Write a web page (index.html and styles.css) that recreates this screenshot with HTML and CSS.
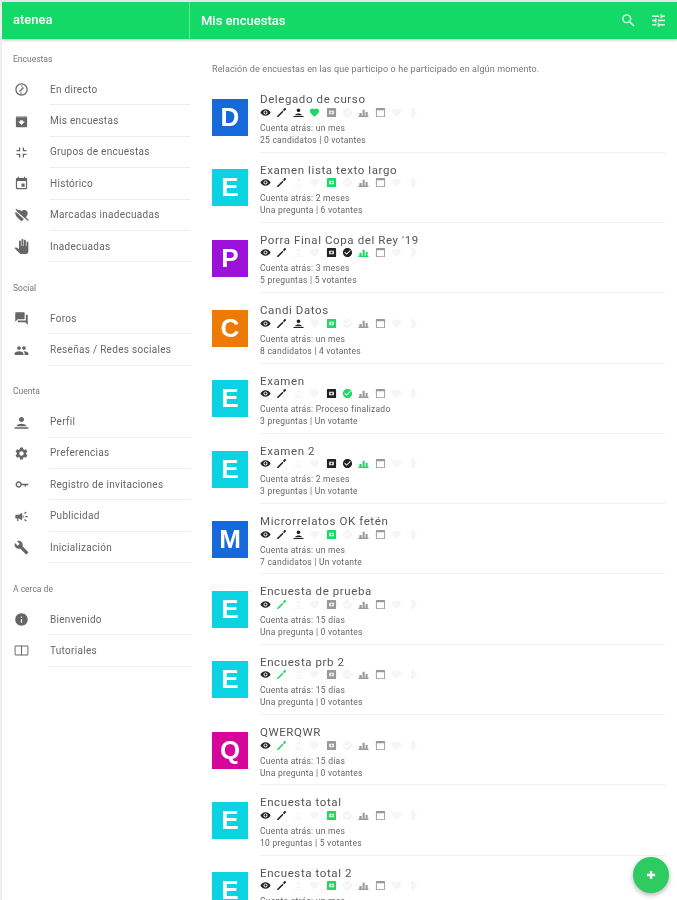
FILE: index.html
```html
<!DOCTYPE html>
<html lang="en">
<head>
    <meta charset="UTF-8">
    <meta name="viewport" content="width=device-width, initial-scale=1.0">
    <title>atenea</title>
    <link rel="stylesheet" href="styles.css">
</head>
<body>
    <svg class="sprite" xmlns="http://www.w3.org/2000/svg">
        <symbol id="i-search" viewBox="0 0 24 24"><path d="M15.5 14h-.79l-.28-.27A6.471 6.471 0 0 0 16 9.5 6.5 6.5 0 1 0 9.5 16c1.61 0 3.09-.59 4.23-1.57l.27.28v.79l5 4.99L20.49 19l-4.99-5zm-6 0C7.01 14 5 11.99 5 9.5S7.01 5 9.5 5 14 7.01 14 9.5 11.99 14 9.5 14z"/></symbol>
        <symbol id="i-tune" viewBox="0 0 24 24"><path d="M3 17v2h6v-2H3zM3 5v2h10V5H3zm10 16v-2h8v-2h-8v-2h-2v6h2zM7 9v2H3v2h4v2h2V9H7zm14 4v-2H11v2h10zm-6-4h2V7h4V5h-4V3h-2v6z"/></symbol>
        <symbol id="i-live" viewBox="0 0 24 24"><path fill-rule="evenodd" d="M12 2a10 10 0 1 1 0 20 10 10 0 0 1 0-20zm0 2a8 8 0 1 0 0 16 8 8 0 0 0 0-16z"/><path d="M12 5v3.5L14.5 6zM12 19v-3.5L9.500 18zM8 14.500L14.500 8l1.500 1.500L9.500 16z"/></symbol>
        <symbol id="i-archive" viewBox="0 0 24 24"><path d="M20.54 5.23l-1.39-1.68C18.88 3.21 18.47 3 18 3H6c-.47 0-.88.21-1.16.55L3.46 5.23C3.17 5.57 3 6.02 3 6.5V19c0 1.1.9 2 2 2h14c1.1 0 2-.9 2-2V6.5c0-.48-.17-.93-.46-1.27zM12 17.5L6.5 12H10v-2h4v2h3.5L12 17.5zM5.12 5l.81-1h12l.94 1H5.12z"/></symbol>
        <symbol id="i-groups" viewBox="0 0 24 24"><path d="M4 16h4v4h2v-6H4v2zm4-8H4v2h6V4H8v4zm6 12h2v-4h4v-2h-6v6zm2-12V4h-2v6h6V8h-4z"/></symbol>
        <symbol id="i-event" viewBox="0 0 24 24"><path d="M17 12h-5v5h5v-5zM16 1v2H8V1H6v2H5c-1.11 0-1.99.9-1.99 2L3 19c0 1.1.89 2 2 2h14c1.1 0 2-.9 2-2V5c0-1.1-.9-2-2-2h-1V1h-2zm3 18H5V8h14v11z"/></symbol>
        <symbol id="i-heart" viewBox="0 0 24 24"><path d="M12 21.35l-1.45-1.32C5.4 15.36 2 12.28 2 8.5 2 5.42 4.42 3 7.5 3c1.74 0 3.41.81 4.5 2.09C13.09 3.81 14.76 3 16.5 3 19.58 3 22 5.42 22 8.5c0 3.78-3.4 6.86-8.55 11.54L12 21.35z"/></symbol>
        <symbol id="i-flagged" viewBox="0 0 24 24"><path d="M12 21.35l-1.45-1.32C5.4 15.36 2 12.28 2 8.5 2 5.42 4.42 3 7.5 3c1.74 0 3.41.81 4.5 2.09C13.09 3.81 14.76 3 16.5 3 19.58 3 22 5.42 22 8.5c0 3.78-3.4 6.86-8.55 11.54L12 21.35z"/><path d="M2 4l20 18" stroke="#fff" stroke-width="2"/><path d="M3 2l20 18" stroke="currentColor" stroke-width="2"/></symbol>
        <symbol id="i-hand" viewBox="0 0 24 24"><path d="M23 5.5V20c0 2.2-1.8 4-4 4h-7.3c-1.08 0-2.1-.43-2.85-1.19L1 14.83s1.26-1.23 1.3-1.25c.22-.19.49-.29.79-.29.22 0 .42.06.6.16.04.01 4.31 2.46 4.31 2.46V4c0-.83.67-1.5 1.5-1.5S11 3.17 11 4v7h1V1.5c0-.83.67-1.5 1.5-1.5S15 .67 15 1.5V11h1V2.5c0-.83.67-1.5 1.5-1.5s1.5.67 1.5 1.5V11h1V5.5c0-.83.67-1.5 1.5-1.5s1.5.67 1.5 1.5z"/></symbol>
        <symbol id="i-forum" viewBox="0 0 24 24"><path d="M21 6h-2v9H6v2c0 .55.45 1 1 1h11l4 4V7c0-.55-.45-1-1-1zm-4 6V3c0-.55-.45-1-1-1H3c-.55 0-1 .45-1 1v14l4-4h10c.55 0 1-.45 1-1z"/></symbol>
        <symbol id="i-people" viewBox="0 0 24 24"><path d="M16 11c1.66 0 2.99-1.34 2.99-3S17.66 5 16 5c-1.66 0-3 1.34-3 3s1.34 3 3 3zm-8 0c1.66 0 2.99-1.34 2.99-3S9.66 5 8 5C6.34 5 5 6.34 5 8s1.34 3 3 3zm0 2c-2.33 0-7 1.17-7 3.5V19h14v-2.5c0-2.33-4.67-3.5-7-3.5zm8 0c-.29 0-.62.02-.97.05 1.16.84 1.97 1.97 1.97 3.45V19h6v-2.5c0-2.33-4.67-3.5-7-3.5z"/></symbol>
        <symbol id="i-person" viewBox="0 0 24 24"><path d="M12 12c2.21 0 4-1.79 4-4s-1.790-4-4-4-4 1.79-4 4 1.79 4 4 4zm0 2c-2.67 0-8 1.34-8 4v2h16v-2c0-2.66-5.33-4-8-4z"/></symbol>
        <symbol id="i-person-wide" viewBox="0 0 24 24"><path d="M12 11c2.21 0 4-1.79 4-4s-1.790-4-4-4-4 1.79-4 4 1.79 4 4 4zm0 3c-2.67 0-7 1-8 4h16c-1-3-5.33-4-8-4zM1 19.500h22V22H1z"/></symbol>
        <symbol id="i-settings" viewBox="0 0 24 24"><path d="M19.14 12.94c.04-.3.06-.61.06-.94 0-.32-.02-.64-.07-.94l2.03-1.58c.18-.14.23-.41.12-.61l-1.92-3.32c-.12-.22-.37-.29-.59-.22l-2.39.96c-.5-.38-1.03-.7-1.62-.94l-.36-2.54c-.04-.24-.24-.41-.48-.41h-3.84c-.24 0-.43.17-.47.41l-.36 2.54c-.59.24-1.13.57-1.62.94l-2.39-.96c-.22-.08-.47 0-.59.22L2.74 8.87c-.12.21-.08.47.12.61l2.03 1.58c-.05.3-.09.63-.09.94s.02.64.07.94l-2.03 1.58c-.18.14-.23.41-.12.61l1.92 3.32c.12.22.37.29.59.22l2.39-.96c.5.38 1.03.7 1.62.94l.36 2.54c.05.24.24.41.48.41h3.84c.24 0 .44-.17.47-.41l.36-2.54c.59-.24 1.13-.56 1.62-.94l2.39.96c.22.08.47 0 .59-.22l1.92-3.32c.12-.22.07-.47-.12-.61l-2.01-1.58zM12 15.6c-1.98 0-3.6-1.62-3.6-3.6s1.62-3.6 3.6-3.6 3.6 1.62 3.6 3.6-1.62 3.6-3.6 3.6z"/></symbol>
        <symbol id="i-key" viewBox="0 0 24 24"><path fill-rule="evenodd" d="M12.300 10.800A5 5 0 1 0 12.300 13.200H17v1.800h2.500v-1.800H23v-2.400H12.300zM7.500 14.800a2.800 2.800 0 1 1 0-5.600 2.800 2.800 0 0 1 0 5.600z"/></symbol>
        <symbol id="i-campaign" viewBox="0 0 24 24"><path d="M18 11v2h4v-2h-4zm-2 6.61c.96.71 2.21 1.65 3.2 2.39.4-.53.8-1.07 1.2-1.6-.99-.74-2.24-1.68-3.2-2.4-.4.54-.8 1.08-1.2 1.61zM20.4 5.6c-.4-.53-.8-1.07-1.2-1.6-.99.74-2.24 1.68-3.2 2.4.4.53.8 1.07 1.2 1.6.96-.72 2.21-1.65 3.2-2.4zM4 9c-1.1 0-2 .9-2 2v2c0 1.1.9 2 2 2h1v4h2v-4h1l5 3V6L8 9H4zm11.5 3c0-1.33-.58-2.53-1.5-3.35v6.69c.92-.81 1.5-2.01 1.5-3.34z"/></symbol>
        <symbol id="i-build" viewBox="0 0 24 24"><path d="M22.7 19l-9.1-9.1c.9-2.3.4-5-1.5-6.9-2-2-5-2.4-7.4-1.3L9 6 6 9 1.6 4.7C.4 7.1.9 10.1 2.9 12.1c1.9 1.9 4.6 2.4 6.9 1.5l9.1 9.1c.4.4 1 .4 1.4 0l2.3-2.3c.5-.4.5-1.1.1-1.4z"/></symbol>
        <symbol id="i-info" viewBox="0 0 24 24"><path d="M12 2C6.48 2 2 6.48 2 12s4.48 10 10 10 10-4.48 10-10S17.52 2 12 2zm1 15h-2v-6h2v6zm0-8h-2V7h2v2z"/></symbol>
        <symbol id="i-book" viewBox="0 0 24 24"><path d="M3 4h18a2 2 0 0 1 2 2v12a2 2 0 0 1-2 2H3a2 2 0 0 1-2-2V6a2 2 0 0 1 2-2zm-.500 1.500v13h8.700v-13H2.500zm10.300 0v13h8.700v-13h-8.700z"/></symbol>
        <symbol id="i-eye" viewBox="0 0 24 24"><path d="M12 5C7 5 2.730 7.900 1 12c1.730 4.100 6 7 11 7s9.270-2.900 11-7c-1.730-4.100-6-7-11-7zm0 11.500a4.500 4.500 0 1 1 0-9 4.500 4.500 0 0 1 0 9zm0-7a2.500 2.500 0 1 0 0 5 2.500 2.500 0 0 0 0-5z"/></symbol>
        <symbol id="i-edit" viewBox="0 0 24 24"><path d="M2.500 19.500V22h2.500L16.500 10.500 14 8 2.500 19.500zM21.700 5.400c.4-.4.4-1 0-1.400l-1.700-1.700c-.4-.4-1-.4-1.400 0L15.200 6.800l2.500 2.500 4-3.900z"/></symbol>
        <symbol id="i-box" viewBox="0 0 24 24"><path fill-rule="evenodd" d="M20 2H4a2 2 0 0 0-2 2v16a2 2 0 0 0 2 2h16a2 2 0 0 0 2-2V4a2 2 0 0 0-2-2zm-3 14H7V8h10v8z"/><path d="M10 10h4v4h-4z"/></symbol>
        <symbol id="i-check" viewBox="0 0 24 24"><path d="M12 2C6.48 2 2 6.48 2 12s4.48 10 10 10 10-4.48 10-10S17.52 2 12 2zm-2 15l-5-5 1.41-1.41L10 14.17l7.59-7.59L19 8l-9 9z"/></symbol>
        <symbol id="i-bars" viewBox="0 0 24 24"><path d="M1 19h22v3H1zM3 13h5v6H3zM10 6h4.500v13H10zM16.500 11H21v8h-4.500z"/></symbol>
        <symbol id="i-cal" viewBox="0 0 24 24"><path d="M20 2H4a2 2 0 0 0-2 2v16c0 1.100.9 2 2 2h16c1.100 0 2-.9 2-2V4a2 2 0 0 0-2-2zm0 18H4V7h16v13z"/></symbol>
        <symbol id="i-tag" viewBox="0 0 24 24"><path d="M7 2h6l7 10-7 10H7z"/></symbol>
        <symbol id="i-plus" viewBox="0 0 24 24"><path d="M19 14h-5v5h-4v-5H5v-4h5V5h4v5h5v4z"/></symbol>
    </svg>

    <div class="app">
        <header class="topbar">
            <div class="brand">atenea</div>
            <div class="page-bar">
                <h1>Mis encuestas</h1>
                <svg class="bar-icon"><use href="#i-search"/></svg>
                <svg class="bar-icon"><use href="#i-tune"/></svg>
            </div>
        </header>

        <div class="content">
            <nav class="sidebar">
                <section class="nav-group">
                    <h2>Encuestas</h2>
                    <a class="nav-item"><svg><use href="#i-live"/></svg><span>En directo</span></a>
                    <a class="nav-item"><svg><use href="#i-archive"/></svg><span>Mis encuestas</span></a>
                    <a class="nav-item"><svg><use href="#i-groups"/></svg><span>Grupos de encuestas</span></a>
                    <a class="nav-item"><svg><use href="#i-event"/></svg><span>Histórico</span></a>
                    <a class="nav-item"><svg><use href="#i-flagged"/></svg><span>Marcadas inadecuadas</span></a>
                    <a class="nav-item"><svg><use href="#i-hand"/></svg><span>Inadecuadas</span></a>
                </section>
                <section class="nav-group">
                    <h2>Social</h2>
                    <a class="nav-item"><svg><use href="#i-forum"/></svg><span>Foros</span></a>
                    <a class="nav-item"><svg><use href="#i-people"/></svg><span>Reseñas / Redes sociales</span></a>
                </section>
                <section class="nav-group">
                    <h2>Cuenta</h2>
                    <a class="nav-item"><svg><use href="#i-person-wide"/></svg><span>Perfil</span></a>
                    <a class="nav-item"><svg><use href="#i-settings"/></svg><span>Preferencias</span></a>
                    <a class="nav-item"><svg><use href="#i-key"/></svg><span>Registro de invitaciones</span></a>
                    <a class="nav-item"><svg><use href="#i-campaign"/></svg><span>Publicidad</span></a>
                    <a class="nav-item"><svg><use href="#i-build"/></svg><span>Inicialización</span></a>
                </section>
                <section class="nav-group">
                    <h2>A cerca de</h2>
                    <a class="nav-item"><svg><use href="#i-info"/></svg><span>Bienvenido</span></a>
                    <a class="nav-item"><svg><use href="#i-book"/></svg><span>Tutoriales</span></a>
                </section>
            </nav>

            <main class="main">
                <p class="intro">Relación de encuestas en las que participo o he participado en algún momento.</p>
                <div class="poll-list" id="poll-list"></div>
            </main>
        </div>

        <button class="fab"><svg><use href="#i-plus"/></svg></button>
    </div>

    <script src="script.js"></script>
</body>
</html>
```

FILE: styles.css
```css
* {
    box-sizing: border-box;
}
html, body {
    height: 900px;
    margin: 0;
    overflow: hidden;
}
body {
    font-family: Roboto, "Liberation Sans", sans-serif;
    background-color: #fff;
    color: #555;
}
.sprite {
    display: none;
}
.app {
    position: relative;
    height: 900px;
    overflow: hidden;
    border-top: 2px solid #e6e6e6;
    border-left: 2px solid #eee;
    filter: blur(0.5px);
}
.topbar {
    display: flex;
    height: 37px;
    background-color: #13da66;
    color: #fff;
    box-shadow: 0 1px 3px rgba(0,0,0,0.25);
    position: relative;
}
.brand {
    width: 188px;
    padding-left: 11px;
    border-right: 1px solid #5fe796;
    font-size: 13px;
    font-weight: 500;
    line-height: 36px;
}
.page-bar {
    flex: 1;
    display: flex;
    align-items: center;
    gap: 13px;
    padding: 0 10px 1px 11px;
}
.page-bar h1 {
    flex: 1;
    margin: 0;
    font-size: 13px;
    font-weight: 500;
}
.bar-icon {
    width: 17px;
    height: 17px;
    fill: #e6fbee;
}
.content {
    display: flex;
}
.sidebar {
    width: 188px;
    padding-top: 10px;
    flex-shrink: 0;
}
.nav-group {
    margin-bottom: 15.6px;
}
.nav-group h2 {
    margin: 0 0 5px;
    padding-left: 11px;
    font-size: 8.5px;
    font-weight: 400;
    line-height: 20px;
    color: #777;
}
.nav-item {
    display: flex;
    align-items: center;
    height: 31.4px;
    padding-left: 12px;
    font-size: 10px;
    letter-spacing: 0.3px;
    color: #666;
}
.nav-item svg {
    width: 15px;
    height: 15px;
    fill: #666;
    color: #666;
    flex-shrink: 0;
}
.nav-item span {
    display: flex;
    align-items: center;
    flex: 1;
    height: 100%;
    margin-left: 21px;
    border-bottom: 1px solid #eee;
}
.main {
    flex: 1;
    padding: 22.5px 12px 0 22px;
}
.intro {
    margin: 0 0 6.9px;
    font-size: 9px;
    letter-spacing: 0.13px;
    line-height: 14px;
    color: #777;
}
.poll {
    display: flex;
    align-items: center;
    height: 70.3px;
    gap: 12px;
}
.avatar {
    width: 36px;
    height: 37px;
    flex-shrink: 0;
    color: #fff;
    font-family: "Liberation Sans", sans-serif;
    font-size: 26px;
    font-weight: bold;
    line-height: 37px;
    text-align: center;
}
.poll-body {
    flex: 1;
    height: 100%;
    padding-top: 10px;
    border-bottom: 1px solid #f0f0f0;
}
.poll-title {
    font-size: 11.5px;
    letter-spacing: 0.6px;
    line-height: 14px;
    color: #555;
}
.poll-icons {
    display: flex;
    gap: 5.4px;
    height: 12px;
    align-items: center;
    margin-bottom: 3.5px;
}
.poll-icons svg {
    width: 11px;
    height: 11px;
}
.dark { fill: #222; }
.mid { fill: #999; }
.faint { fill: #f6f6f6; }
.green { fill: #1fd765; }
.poll-meta {
    font-size: 8.5px;
    letter-spacing: 0.25px;
    line-height: 12px;
    color: #666;
}
.fab {
    position: absolute;
    right: 8px;
    bottom: 7px;
    width: 36px;
    height: 36px;
    padding: 11px;
    border: none;
    border-radius: 50%;
    background-color: #2dcb60;
    box-shadow: 0 2px 5px rgba(0,0,0,0.3);
}
.fab svg {
    display: block;
    width: 14px;
    height: 14px;
    fill: #fff;
}
```

FILE: script.js
```js
// Icon order in every row of the list
const ICONS = ['eye', 'edit', 'person-wide', 'heart', 'box', 'check', 'bars', 'cal', 'heart', 'tag'];
const STATES = { d: 'dark', m: 'mid', f: 'faint', g: 'green' };

const polls = [
    ['D', '#1569d8', 'Delegado de curso', 'un mes', '25 candidatos | 0 votantes', 'dddgmfmmff'],
    ['E', '#0bd3e2', 'Examen lista texto largo', '2 meses', 'Una pregunta | 6 votantes', 'ddffgfmmff'],
    ['P', '#9a12d8', "Porra Final Copa del Rey '19", '3 meses', '5 preguntas | 5 votantes', 'ddffddgmff'],
    ['C', '#ee7a06', 'Candi Datos', 'un mes', '8 candidatos | 4 votantes', 'dddfgfmmff'],
    ['E', '#0bd3e2', 'Examen', 'Proceso finalizado', '3 preguntas | Un votante', 'ddffdgmmff'],
    ['E', '#0bd3e2', 'Examen 2', '2 meses', '3 preguntas | Un votante', 'ddffddgmff'],
    ['M', '#1569d8', 'Microrrelatos OK fetén', 'un mes', '7 candidatos | Un votante', 'dddfgfmmff'],
    ['E', '#0bd3e2', 'Encuesta de prueba', '15 días', 'Una pregunta | 0 votantes', 'dgffmfmmff'],
    ['E', '#0bd3e2', 'Encuesta prb 2', '15 días', 'Una pregunta | 0 votantes', 'dgffmfmmff'],
    ['Q', '#d5069a', 'QWERQWR', '15 días', 'Una pregunta | 0 votantes', 'dgffmfmmff'],
    ['E', '#0bd3e2', 'Encuesta total', 'un mes', '10 preguntas | 5 votantes', 'ddffgfmmff'],
    ['E', '#0bd3e2', 'Encuesta total 2', 'un mes', '10 preguntas | 5 votantes', 'ddffgfmmff']
];

document.getElementById('poll-list').innerHTML = polls.map(([letter, color, title, left, counts, states]) => {
    const icons = ICONS.map((name, i) =>
        `<svg class="${STATES[states[i]]}"><use href="#i-${name}"/></svg>`).join('');
    return `<div class="poll">
        <div class="avatar" style="background-color: ${color}">${letter}</div>
        <div class="poll-body">
            <div class="poll-title">${title}</div>
            <div class="poll-icons">${icons}</div>
            <div class="poll-meta">Cuenta atrás: ${left}</div>
            <div class="poll-meta">${counts}</div>
        </div>
    </div>`;
}).join('');
```
